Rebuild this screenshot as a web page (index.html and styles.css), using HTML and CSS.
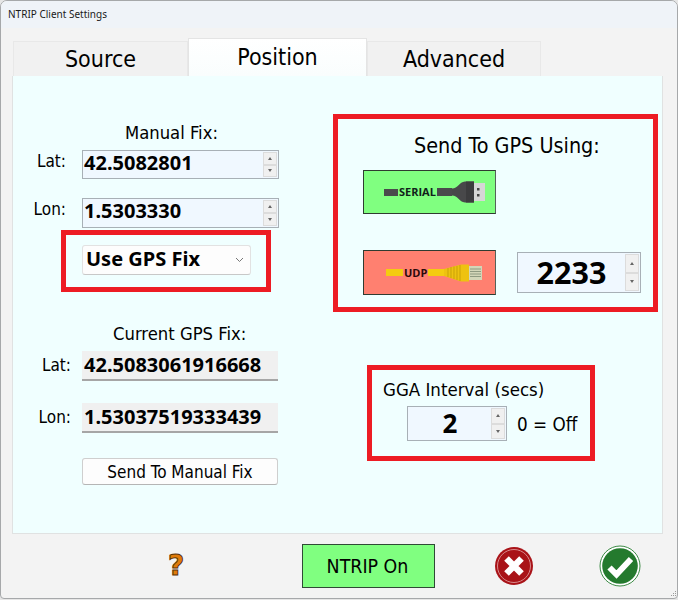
FILE: index.html
```html
<!DOCTYPE html>
<html lang="en">
<head>
<meta charset="utf-8">
<title>NTRIP Client Settings</title>
<link rel="stylesheet" href="styles.css">
</head>
<body>
<div class="window">
  <div class="titlebar">NTRIP Client Settings</div>
  <div class="tabs">
    <div class="tab tab-source">Source</div>
    <div class="tab tab-active">Position</div>
    <div class="tab tab-advanced">Advanced</div>
  </div>
  <div class="panel">
    <div class="col-left">
      <div class="heading heading-manual">Manual Fix:</div>
      <div class="row row-manual">
        <span class="label">Lat:</span>
        <div class="spin spin-coord"><span class="spin-value">42.5082801</span><span class="spin-btns"><i class="up"></i><i class="down"></i></span></div>
      </div>
      <div class="row row-manual row-lon">
        <span class="label">Lon:</span>
        <div class="spin spin-coord"><span class="spin-value">1.5303330</span><span class="spin-btns"><i class="up"></i><i class="down"></i></span></div>
      </div>
      <div class="redbox redbox-select">
        <div class="select"><span class="select-text">Use GPS Fix</span>
          <svg class="chevron" width="9" height="6" viewBox="0 0 9 6"><path d="M1 1l3.500 3.500L8 1" fill="none" stroke="#777" stroke-width="1"/></svg>
        </div>
      </div>
      <div class="heading heading-current">Current GPS Fix:</div>
      <div class="row row-current">
        <span class="label">Lat:</span>
        <div class="readout">42.5083061916668</div>
      </div>
      <div class="row row-current row-current-lon">
        <span class="label">Lon:</span>
        <div class="readout">1.53037519333439</div>
      </div>
      <button class="btn-send">Send To Manual Fix</button>
    </div>
    <div class="col-right">
      <div class="redbox redbox-send">
        <div class="send-title">Send To GPS Using:</div>
        <button class="link-btn link-serial">
          <i class="cable-stub cable-dark"></i><span class="link-text link-text-serial">SERIAL</span>
          <svg class="plug" width="50" height="24" viewBox="0 0 50 24">
            <rect x="0" y="8" width="15" height="8" fill="#4a4a4c"/>
            <path d="M15 8.500C21 8.500 22 2 28 1.500H37V22.500H28C22 22 21 15.500 15 15.500Z" fill="#48484a"/>
            <rect x="29" y="1.500" width="8" height="21" fill="#3c3c3e"/>
            <rect x="37" y="3" width="11" height="18" fill="#d6d6d6"/>
            <rect x="40" y="8" width="2.500" height="2.500" fill="#444"/>
            <rect x="40" y="14" width="2.500" height="2.500" fill="#444"/>
          </svg>
        </button>
        <div class="udp-row">
          <button class="link-btn link-udp">
            <i class="cable-stub cable-yellow"></i><span class="link-text link-text-udp">UDP</span>
            <svg class="plug plug-rj" width="55" height="20" viewBox="0 0 55 20">
              <rect x="0" y="6" width="16" height="7" fill="#f4cc10"/>
              <path d="M16 6L33 1.500H41V18.500H33L16 13Z" fill="#eec210"/>
              <path d="M20 5V14M23 4V15M26 3.500V16M29 3V17M32 2V18" stroke="#c9a108" stroke-width="1"/>
              <rect x="41" y="3" width="13" height="14" fill="#d3d6b8"/>
              <path d="M42 6H53M42 8.500H53M42 11H53M42 13.500H53" stroke="#8f9a80" stroke-width="1"/>
            </svg>
          </button>
          <div class="spin spin-port"><span class="spin-value spin-value-center">2233</span><span class="spin-btns"><i class="up"></i><i class="down"></i></span></div>
        </div>
      </div>
      <div class="redbox redbox-gga">
        <div class="gga-title">GGA Interval (secs)</div>
        <div class="gga-row">
          <div class="spin spin-gga"><span class="spin-value spin-value-center">2</span><span class="spin-btns"><i class="up"></i><i class="down"></i></span></div>
          <span class="gga-note">0 = Off</span>
        </div>
      </div>
    </div>
  </div>
  <div class="footer">
    <span class="help">?</span>
    <button class="btn-ntrip">NTRIP On</button>
    <svg class="icon-cancel" width="40" height="40" viewBox="0 0 40 40">
      <circle cx="20" cy="20" r="19" fill="#a91318"/>
      <circle cx="20" cy="20" r="16.500" fill="none" stroke="#d98a8c" stroke-width="1"/>
      <path d="M12.500 12.500L27.500 27.500M27.500 12.500L12.500 27.500" stroke="#fff" stroke-width="6.500"/>
    </svg>
    <svg class="icon-ok" width="42" height="42" viewBox="0 0 42 42">
      <circle cx="21" cy="21" r="20" fill="#fff" stroke="#3c8a45" stroke-width="1"/>
      <circle cx="21" cy="21" r="17.800" fill="#247a2e"/>
      <path d="M10.500 22.500L17.500 29.500L32 14" fill="none" stroke="#fff" stroke-width="6"/>
    </svg>
  </div>
  <svg class="grip" width="8" height="8" viewBox="0 0 8 8"><path d="M6 1h1v1H6zM4 3h1v1H4zM6 3h1v1H6zM2 5h1v1H2zM4 5h1v1H4zM6 5h1v1H6z" fill="#9a9a9a"/></svg>
</div>
</body>
</html>
```
FILE: styles.css
```css
* { box-sizing: border-box; }
html, body { margin: 0; padding: 0; background: #e6e6e6; }
body { width: 678px; height: 600px; overflow: hidden; font-family: "DejaVu Sans Condensed", "DejaVu Sans", sans-serif; color: #000; }

.window {
  position: relative;
  width: 678px; height: 599px;
  background: #f3f3f3;
  border: 1px solid #a6a8aa;
  border-radius: 7px 7px 4px 4px;
  overflow: hidden;
  display: flex; flex-direction: column;
}
.titlebar { height: 27px; flex: none; padding: 5px 0 0 7px; background: #eff3f8; font: 10px/16px "Noto Sans", sans-serif; color: #1a1a1a; }

.tabs { display: flex; align-items: flex-end; height: 48px; flex: none; padding-left: 12px; font-size: 23px; }
.tab { text-align: center; background: #f1f1f1; border: 1px solid #e8e8e8; border-bottom: 0; height: 35px; line-height: 35px; }
.tab-source { width: 175px; }
.tab-active { width: 179px; height: 38px; line-height: 37px; background: linear-gradient(#fff, #f9fdfd); border-color: #e4e4e4; }
.tab-advanced { width: 174px; }

.panel { flex: none; display: flex; width: 651px; height: 458px; margin-left: 11px; background: #f0ffff; border: 1px solid #e0e2e2; border-top: 0; }

.col-left { width: 320px; flex: none; display: flex; flex-direction: column; align-items: flex-start; }
.col-right { flex: none; display: flex; flex-direction: column; align-items: flex-start; }

.heading { font-size: 18.300px; line-height: 22px; white-space: nowrap; }
.heading-manual { margin: 46px 0 6px 112px; }
.heading-current { margin: 31px 0 6px 100px; }

.row { display: flex; align-items: center; }
.label { font-size: 17px; text-align: right; }
.row-manual .label { width: 53px; margin-right: 16px; position: relative; top: -4px; }
.row-lon { margin-top: 19px; }
.row-current .label { width: 58px; margin-right: 11px; position: relative; top: -1px; }
.row-current-lon { margin-top: 22px; }

.spin { display: flex; align-items: stretch; background: #f0f8ff; border: 1px solid #a8b0b6; }
.spin-coord { width: 197px; height: 29px; }
.row-lon .spin-coord { height: 30px; }
.spin-port { width: 124px; height: 41px; margin-left: 21px; }
.spin-gga { width: 100px; height: 35px; }
.spin-value { flex: 1; font-family: "Noto Sans", sans-serif; font-weight: 700; font-size: 20px; line-height: 24px; padding-left: 1px; align-self: center; position: relative; top: -2px; }
.spin-value-center { text-align: center; font-size: 30.500px; line-height: 36px; padding-right: 1px; top: -1px; }
.spin-gga .spin-value-center { font-size: 26px; padding-right: 0; }
.spin-btns { width: 14px; flex: none; display: flex; flex-direction: column; margin: 1px 1px 1px 0; background: #f0f0f0; }
.spin-btns i { flex: 1; display: flex; align-items: center; justify-content: center; border: 1px solid #dcdcdc; }
.spin-btns i::after { content: ""; width: 0; height: 0; border-left: 2.500px solid transparent; border-right: 2.500px solid transparent; }
.up::after { border-bottom: 3px solid #666; }
.down::after { border-top: 3px solid #666; }

.redbox { border: 5px solid #ed1c24; }
.redbox-select { width: 210px; height: 62px; margin: 2px 0 0 48px; padding: 10px 0 0 16px; }
.select { width: 169px; height: 30px; background: #fdfdfd; border: 1px solid #e2e2e2; border-bottom-color: #c8c8c8; border-radius: 3px; display: flex; align-items: center; justify-content: space-between; padding: 0 6px 0 3px; font-family: "Noto Sans", sans-serif; font-weight: 700; font-size: 20px; }
.select-text { line-height: 26px; margin-top: -2px; }

.readout { width: 196px; height: 30px; background: #f0f0f0; border-bottom: 2px solid #a6a6a6; font-family: "Noto Sans", sans-serif; font-weight: 700; font-size: 20px; line-height: 27px; padding-left: 2px; }
.btn-send { width: 196px; height: 27px; margin: 25px 0 0 69px; background: #fdfdfd; border: 1px solid #cfcfcf; border-bottom-color: #b5b5b5; border-radius: 3px; font-family: inherit; font-size: 17px; color: #000; padding: 0; }

.redbox-send { width: 325px; height: 198px; margin-top: 38px; padding: 0 0 0 25px; display: flex; flex-direction: column; align-items: flex-start; }
.send-title { font-size: 21.400px; line-height: 26px; margin: 14px 0 0 51px; white-space: nowrap; }
.link-btn { width: 133px; height: 44px; border: 1px solid #2f3b30; border-right-color: #55625a; padding: 0; display: flex; align-items: center; }
.link-serial { background: #80ff80; margin-top: 11px; padding-left: 20px; }
.link-udp { background: #ff8070; height: 45px; padding-left: 22px; }
.udp-row { display: flex; align-items: center; margin-top: 36px; }
.cable-stub { display: block; flex: none; width: 14px; height: 7px; }
.cable-dark { background: #4a4a4c; }
.cable-yellow { background: #f4cc10; width: 17px; }
.link-text { font-family: "Open Sans", sans-serif; font-weight: 700; color: #10221a; font-size: 11px; line-height: 12px; }
.link-text-serial { margin: 0 1px; }
.link-text-udp { margin: 0 1px; font-size: 11px; color: #2a0a0a; }
.plug { display: block; flex: none; }

.redbox-gga { width: 228px; height: 96px; margin: 53px 0 0 34px; padding: 9px 0 0 11px; }
.gga-title { font-size: 18.500px; line-height: 22px; white-space: nowrap; }
.gga-row { display: flex; align-items: center; margin: 5px 0 0 24px; }
.gga-note { font-size: 18.700px; margin: 2px 0 0 10px; white-space: nowrap; }

.footer { flex: 1; display: flex; align-items: center; padding: 0; position: relative; }
.help { width: 18px; margin: 0 0 0 167px; font: 700 28px/30px "DejaVu Sans", sans-serif; color: #e07b0a; -webkit-text-stroke: 1px #5a3205; }
.btn-ntrip { width: 133px; height: 44px; margin-left: 116px; background: #80ff80; border: 1px solid #2f4a35; font-family: inherit; font-size: 19.400px; color: #000; padding: 0 2px 0 0; }
.icon-cancel { margin-left: 59px; display: block; }
.icon-ok { margin-left: 65px; display: block; }
.grip { position: absolute; right: 0; bottom: 0; }
```
